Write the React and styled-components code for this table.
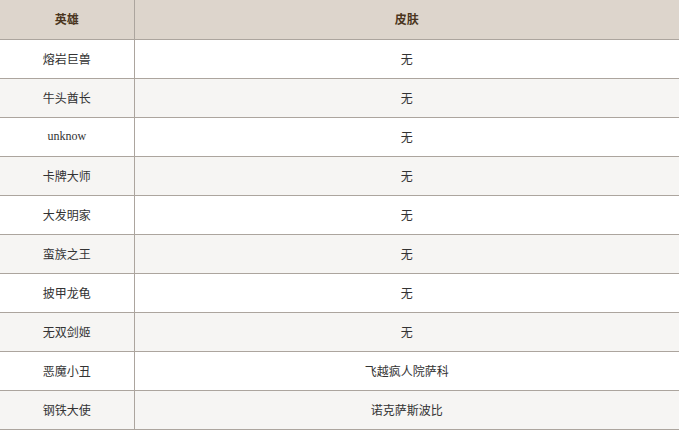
import React from 'react';
import styled, { createGlobalStyle } from 'styled-components';

const GlobalStyle = createGlobalStyle`
  html, body {
    margin: 0;
    padding: 0;
    background: #fff;
  }
  body {
    font-family: "Liberation Sans", "Noto Sans CJK SC", sans-serif;
  }
`;

const StyledTable = styled.table`
  width: 679px;
  border-collapse: collapse;
  table-layout: fixed;
  font-size: 12px;
  color: #333;
`;

const StyledHeadCell = styled.th`
  box-sizing: border-box;
  height: 39px;
  padding: 0 0 1px;
  background-color: #ddd5cc;
  color: #4a3520;
  font-weight: bold;
  text-align: center;
  border-bottom: 1px solid #aca59e;
  border-right: ${(p) => (p.$last ? 'none' : '1px solid #aca59e')};
  width: ${(p) => (p.$width ? p.$width : 'auto')};
`;

const StyledRow = styled.tr`
  background-color: ${(p) => (p.$odd ? '#f6f5f3' : '#fff')};
`;

const StyledCell = styled.td`
  box-sizing: border-box;
  height: 39px;
  padding: 0 0 1px;
  text-align: center;
  border-bottom: 1px solid #aca59e;
  border-right: ${(p) => (p.$last ? 'none' : '1px solid #aca59e')};
  font-family: ${(p) =>
    p.$latin ? '"Liberation Serif", serif' : '"Noto Sans CJK SC", sans-serif'};
`;

const rows = [
  ['熔岩巨兽', '无'],
  ['牛头酋长', '无'],
  ['unknow', '无'],
  ['卡牌大师', '无'],
  ['大发明家', '无'],
  ['蛮族之王', '无'],
  ['披甲龙龟', '无'],
  ['无双剑姬', '无'],
  ['恶魔小丑', '飞越疯人院萨科'],
  ['钢铁大使', '诺克萨斯波比'],
];

function App() {
  return (
    <>
      <GlobalStyle />
      <StyledTable>
        <thead>
          <tr>
            <StyledHeadCell $width="134px">英雄</StyledHeadCell>
            <StyledHeadCell $last>皮肤</StyledHeadCell>
          </tr>
        </thead>
        <tbody>
          {rows.map(([hero, skin], i) => (
            <StyledRow key={hero} $odd={i % 2 === 1}>
              <StyledCell $latin={/^[a-z]+$/.test(hero)}>{hero}</StyledCell>
              <StyledCell $last>{skin}</StyledCell>
            </StyledRow>
          ))}
        </tbody>
      </StyledTable>
    </>
  );
}

export default App;
